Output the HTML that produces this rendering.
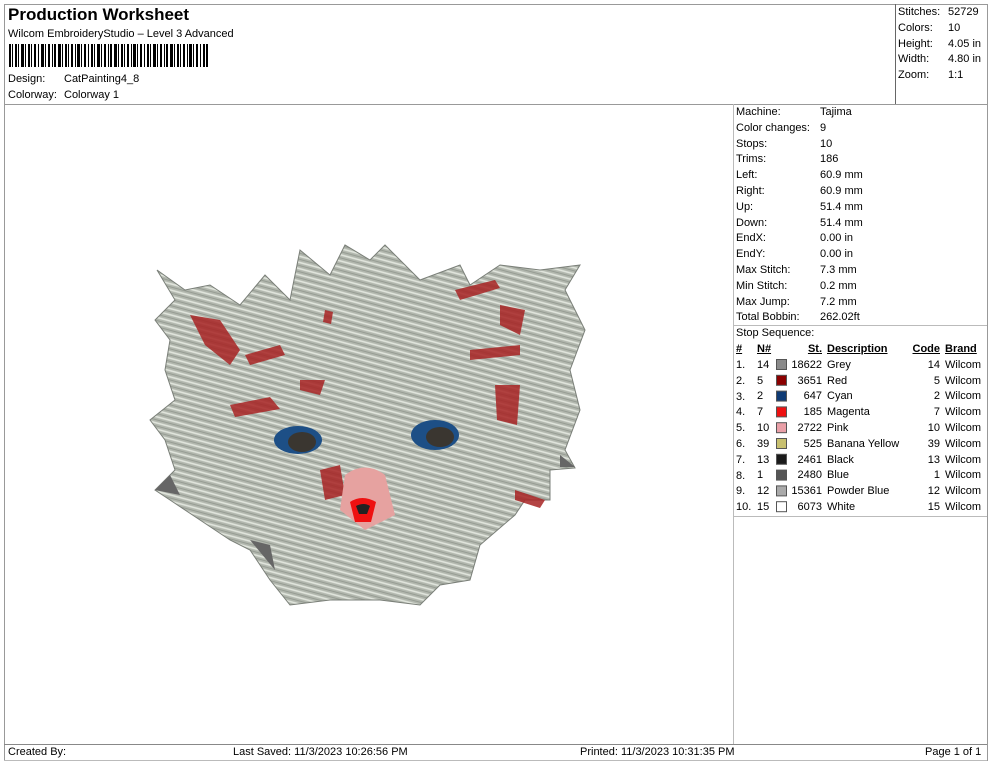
<!DOCTYPE html>
<html><head><meta charset="utf-8"><style>
*{margin:0;padding:0;box-sizing:border-box}
body{width:990px;height:762px;background:#fff;font-family:"Liberation Sans",Arial,sans-serif;font-size:11px;color:#000;position:relative;overflow:hidden}
.a{position:absolute;white-space:nowrap}
.ln{position:absolute;background:#999}
.r{text-align:right}
u{text-decoration:underline}
</style></head><body>
<div class="ln" style="left:4px;top:4px;width:983px;height:1px"></div>
<div class="ln" style="left:4px;top:4px;width:1px;height:757px"></div>
<div class="ln" style="left:987px;top:4px;width:1px;height:757px"></div>
<div class="ln" style="left:4px;top:104px;width:983px;height:1px"></div>
<div class="ln" style="left:895px;top:4px;width:1px;height:100px;background:#666"></div>
<div class="ln" style="left:733px;top:104px;width:1px;height:640px;background:#bbb"></div>
<div class="ln" style="left:733px;top:325px;width:254px;height:1px;background:#bbb"></div>
<div class="ln" style="left:733px;top:516px;width:254px;height:1px;background:#bbb"></div>
<div class="ln" style="left:4px;top:744px;width:983px;height:1px;background:#888"></div>
<div class="ln" style="left:4px;top:760px;width:983px;height:1px;background:#bbb"></div>

<div class="a" style="left:8px;top:5px;font-size:17px;font-weight:bold">Production Worksheet</div>
<div class="a" style="left:8px;top:28px">Wilcom EmbroideryStudio – Level 3 Advanced</div>
<svg class="a" style="left:9px;top:44px" width="200" height="23">
<g fill="#000">
<rect x="0" width="2" height="23"/><rect x="3" width="1" height="23"/><rect x="6" width="2" height="23"/><rect x="9" width="1" height="23"/><rect x="12" width="3" height="23"/><rect x="16" width="1" height="23"/><rect x="19" width="2" height="23"/><rect x="22" width="1" height="23"/><rect x="25" width="2" height="23"/><rect x="29" width="1" height="23"/><rect x="32" width="3" height="23"/><rect x="36" width="1" height="23"/><rect x="39" width="2" height="23"/><rect x="43" width="1" height="23"/><rect x="45" width="2" height="23"/><rect x="49" width="3" height="23"/><rect x="53" width="1" height="23"/><rect x="56" width="2" height="23"/><rect x="59" width="1" height="23"/><rect x="62" width="2" height="23"/><rect x="66" width="1" height="23"/><rect x="68" width="3" height="23"/><rect x="72" width="1" height="23"/><rect x="75" width="2" height="23"/><rect x="79" width="1" height="23"/><rect x="82" width="2" height="23"/><rect x="85" width="1" height="23"/><rect x="88" width="3" height="23"/><rect x="92" width="1" height="23"/><rect x="95" width="2" height="23"/><rect x="99" width="1" height="23"/><rect x="101" width="2" height="23"/><rect x="105" width="3" height="23"/><rect x="109" width="1" height="23"/><rect x="112" width="2" height="23"/><rect x="115" width="1" height="23"/><rect x="118" width="2" height="23"/><rect x="122" width="1" height="23"/><rect x="124" width="3" height="23"/><rect x="128" width="1" height="23"/><rect x="131" width="2" height="23"/><rect x="135" width="1" height="23"/><rect x="138" width="2" height="23"/><rect x="141" width="1" height="23"/><rect x="144" width="3" height="23"/><rect x="148" width="1" height="23"/><rect x="151" width="2" height="23"/><rect x="155" width="1" height="23"/><rect x="157" width="2" height="23"/><rect x="161" width="3" height="23"/><rect x="165" width="1" height="23"/><rect x="168" width="2" height="23"/><rect x="171" width="1" height="23"/><rect x="174" width="2" height="23"/><rect x="178" width="1" height="23"/><rect x="180" width="3" height="23"/><rect x="184" width="1" height="23"/><rect x="187" width="2" height="23"/><rect x="191" width="1" height="23"/><rect x="194" width="2" height="23"/><rect x="197" width="2" height="23"/>
</g></svg>
<div class="a" style="left:8px;top:73px">Design:</div><div class="a" style="left:64px;top:73px">CatPainting4_8</div>
<div class="a" style="left:8px;top:89px">Colorway:</div><div class="a" style="left:64px;top:89px">Colorway 1</div>

<div class="a" style="left:898px;top:5px;line-height:15.8px">Stitches:<br>Colors:<br>Height:<br>Width:<br>Zoom:</div>
<div class="a" style="left:948px;top:5px;line-height:15.8px">52729<br>10<br>4.05 in<br>4.80 in<br>1:1</div>

<div class="a" style="left:736px;top:105px;line-height:15.8px">Machine:<br>Color changes:<br>Stops:<br>Trims:<br>Left:<br>Right:<br>Up:<br>Down:<br>EndX:<br>EndY:<br>Max Stitch:<br>Min Stitch:<br>Max Jump:<br>Total Bobbin:<br>Stop Sequence:</div>
<div class="a" style="left:820px;top:105px;line-height:15.8px">Tajima<br>9<br>10<br>186<br>60.9 mm<br>60.9 mm<br>51.4 mm<br>51.4 mm<br>0.00 in<br>0.00 in<br>7.3 mm<br>0.2 mm<br>7.2 mm<br>262.02ft</div>

<div class="a" style="left:736px;top:342px;line-height:15.8px;font-weight:bold"><u>#</u></div>
<div class="a" style="left:736px;top:358px;line-height:15.8px">1.<br>2.<br>3.<br>4.<br>5.<br>6.<br>7.<br>8.<br>9.<br>10.</div>
<div class="a" style="left:757px;top:342px;line-height:15.8px"><b><u>N#</u></b><br>14<br>5<br>2<br>7<br>10<br>39<br>13<br>1<br>12<br>15</div>
<svg class="a" style="left:776px;top:358px" width="12" height="160">
<g stroke="#555" stroke-width="1">
<rect x="0.5" y="1.5" width="10" height="10" fill="#8a8a8a"/>
<rect x="0.5" y="17.3" width="10" height="10" fill="#8b0000"/>
<rect x="0.5" y="33.1" width="10" height="10" fill="#0e3a74"/>
<rect x="0.5" y="48.9" width="10" height="10" fill="#ee1111"/>
<rect x="0.5" y="64.7" width="10" height="10" fill="#eaa0a8"/>
<rect x="0.5" y="80.5" width="10" height="10" fill="#c8c070"/>
<rect x="0.5" y="96.3" width="10" height="10" fill="#1a1a1a"/>
<rect x="0.5" y="112.1" width="10" height="10" fill="#555"/>
<rect x="0.5" y="127.9" width="10" height="10" fill="#aaa"/>
<rect x="0.5" y="143.7" width="10" height="10" fill="#fff"/>
</g></svg>
<div class="a r" style="left:780px;width:42px;top:342px;line-height:15.8px"><b><u>St.</u></b><br>18622<br>3651<br>647<br>185<br>2722<br>525<br>2461<br>2480<br>15361<br>6073</div>
<div class="a" style="left:827px;top:342px;line-height:15.8px"><b><u>Description</u></b><br>Grey<br>Red<br>Cyan<br>Magenta<br>Pink<br>Banana Yellow<br>Black<br>Blue<br>Powder Blue<br>White</div>
<div class="a r" style="left:900px;width:40px;top:342px;line-height:15.8px"><b><u>Code</u></b><br>14<br>5<br>2<br>7<br>10<br>39<br>13<br>1<br>12<br>15</div>
<div class="a" style="left:945px;top:342px;line-height:15.8px"><b><u>Brand</u></b><br>Wilcom<br>Wilcom<br>Wilcom<br>Wilcom<br>Wilcom<br>Wilcom<br>Wilcom<br>Wilcom<br>Wilcom<br>Wilcom</div>

<svg class="a" style="left:0;top:0" width="733" height="744">
<defs><pattern id="f" width="10" height="6" patternUnits="userSpaceOnUse" patternTransform="rotate(15)">
<rect width="10" height="6" fill="#b2b7ae"/><path d="M0 2h10" stroke="#e2e6de" stroke-width="1.6"/><path d="M0 5h10" stroke="#8a9087" stroke-width="0.7"/></pattern></defs>
<polygon fill="url(#f)" stroke="#7a7f78" stroke-width="1" points="157,270 185,290 210,285 240,305 265,275 290,300 300,250 330,275 345,245 370,260 385,245 420,280 460,265 470,285 500,265 540,270 580,265 565,290 585,330 570,370 580,410 565,450 575,468 550,470 550,500 525,500 515,515 480,545 470,580 440,585 420,605 380,600 330,600 290,605 270,580 250,550 230,540 200,520 170,500 155,490 175,470 165,440 150,420 175,400 165,370 170,340 155,320 175,300"/>
<g fill="#a82424" opacity="0.85">
<path d="M190 315l30 5 20 30-10 15-25-20z"/><path d="M230 405l40-8 10 12-45 8z"/><path d="M245 355l35-10 5 10-35 10z"/>
<path d="M455 290l40-10 5 8-40 12z"/><path d="M500 305l25 5-5 25-20-10z"/><path d="M470 350l50-5 0 10-50 5z"/>
<path d="M495 385l25 0-3 40-20-5z"/><path d="M300 380l25 0-5 15-20-5z"/><path d="M320 470l20-5 5 30-20 5z"/>
<path d="M515 490l30 10-5 8-25-8z"/><path d="M325 310l8 2-2 12-8-2z"/>
</g>
<path d="M345 475q20-15 40 0l10 40-30 15-25-20z" fill="#e6a2a0"/>
<ellipse cx="298" cy="440" rx="24" ry="14" fill="#1d4f86"/><ellipse cx="302" cy="442" rx="14" ry="10" fill="#3a3630"/>
<ellipse cx="435" cy="435" rx="24" ry="15" fill="#1d4f86"/><ellipse cx="440" cy="437" rx="14" ry="10" fill="#3a3630"/>
<path d="M350 502q12-8 26 0l-5 20-16 0z" fill="#e11"/><path d="M356 506q8-4 14 0l-3 8-8 0z" fill="#222"/>
<g fill="#666"><path d="M155 490l15-15 10 20z"/><path d="M250 540l20 5 5 25z"/><path d="M560 455l15 12-15 0z"/></g>
</svg>

<div class="a" style="left:8px;top:746px">Created By:</div>
<div class="a" style="left:233px;top:746px">Last Saved: 11/3/2023 10:26:56 PM</div>
<div class="a" style="left:580px;top:746px">Printed: 11/3/2023 10:31:35 PM</div>
<div class="a" style="left:925px;top:746px">Page 1 of 1</div>
</body></html>
